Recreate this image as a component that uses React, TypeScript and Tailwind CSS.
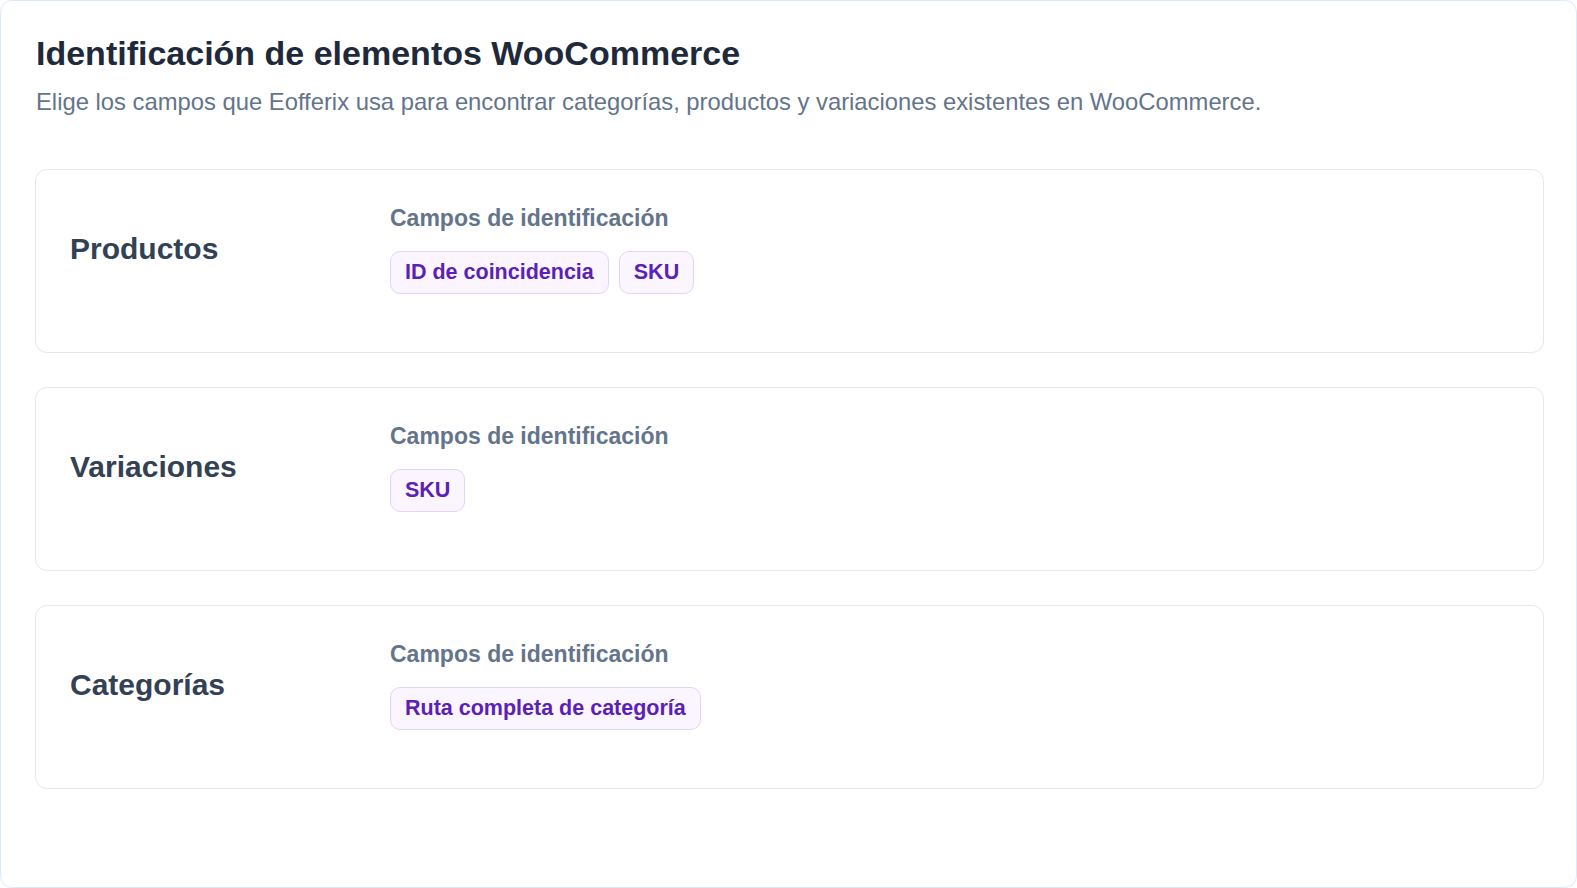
const sections = [
  { title: 'Productos', fields: ['ID de coincidencia', 'SKU'] },
  { title: 'Variaciones', fields: ['SKU'] },
  { title: 'Categorías', fields: ['Ruta completa de categoría'] },
];

function FieldChip({ label }: { label: string }) {
  return (
    <span className="inline-flex items-center rounded-[10px] border border-[#e4d4fb] bg-[#faf5ff] px-[14px] py-[7px] text-[21.5px] font-bold leading-[27px] text-[#5b21b6]">
      {label}
    </span>
  );
}

function SectionCard({ title, fields }: { title: string; fields: string[] }) {
  return (
    <div className="grid grid-cols-[320px_1fr] items-center rounded-[12px] border border-[#e2e8f0] bg-white px-[34px] pt-[34px] pb-[58px]">
      <h2 className="text-[30px] font-bold leading-[36px] text-[#334155]">{title}</h2>
      <div>
        <div className="text-[23px] font-bold leading-[28px] text-[#64748b]">Campos de identificación</div>
        <div className="mt-[19px] flex flex-wrap gap-[10px]">
          {fields.map((f) => (
            <FieldChip key={f} label={f} />
          ))}
        </div>
      </div>
    </div>
  );
}

export default function App() {
  return (
    <div className="h-[888px] w-full bg-white font-['Liberation_Sans',Arial,sans-serif]">
      <div className="h-full rounded-[12px] border border-[#dbeafe] pl-[34px] pr-[32px] pt-[32px]">
        <h1 className="pl-px text-[34px] font-bold leading-[40px] text-[#1e293b]">
          Identificación de elementos WooCommerce
        </h1>
        <p className="mt-[14px] pl-px text-[23.8px] leading-[30px] text-[#64748b]">
          Elige los campos que Eofferix usa para encontrar categorías, productos y variaciones existentes en WooCommerce.
        </p>

        {/* One card per WooCommerce entity */}
        <div className="mt-[52px] flex flex-col gap-[34px]">
          {sections.map((s) => (
            <SectionCard key={s.title} title={s.title} fields={s.fields} />
          ))}
        </div>
      </div>
    </div>
  );
}
